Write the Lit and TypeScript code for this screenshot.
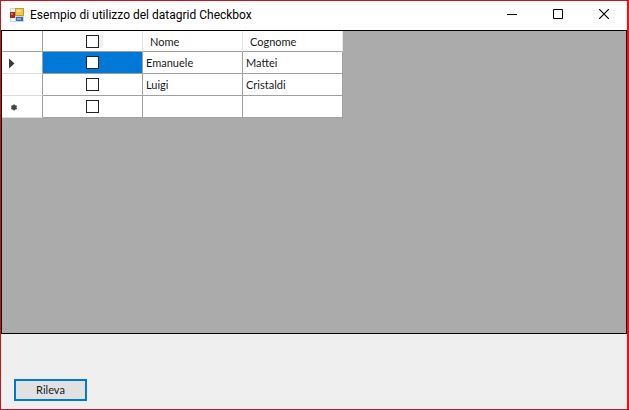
import { LitElement, html, css } from "lit";
import { customElement, state } from "lit/decorators.js";
import { classMap } from "lit/directives/class-map.js";

interface Person {
  nome: string;
  cognome: string;
  checked: boolean;
}

@customElement("app-root")
export class AppRoot extends LitElement {
  static styles = css`
    :host {
      display: flex;
      flex-direction: column;
      box-sizing: border-box;
      min-height: 100vh;
      border: 1px solid #c4161c;
      border-right: 2px solid #ee1111;
      border-bottom-color: #a81c34;
      background: #efefef;
      color: #1a1a22;
      font: 11px/14px Lato, "Liberation Sans", sans-serif;
    }
    .titlebar {
      display: flex;
      align-items: center;
      box-sizing: border-box;
      height: 29px;
      padding: 0 0 2px 9px;
      background: #fff;
      color: #000;
    }
    .logo {
      flex: none;
      width: 14px;
      height: 14px;
      margin-right: 6px;
    }
    .title {
      flex: 1;
      margin: 0;
      font: 12px/16px Roboto, "Liberation Sans", sans-serif;
      white-space: nowrap;
    }
    .caption {
      display: flex;
      align-items: center;
      justify-content: center;
      width: 46px;
      height: 26px;
      padding: 0 0 2px;
      border: 0;
      background: none;
    }
    .grid {
      flex: 1;
      border: 1px solid #000;
      background: #ababab;
    }
    table {
      border-collapse: separate;
      border-spacing: 0;
      table-layout: fixed;
      width: 341px;
      background: #fff;
    }
    .row-head {
      width: 41px;
    }
    th,
    td {
      box-sizing: border-box;
      height: 22px;
      padding: 0 3px;
      border-right: 1px solid #a0a0a0;
      border-bottom: 1px solid #a0a0a0;
      font-weight: 400;
      text-align: left;
      vertical-align: middle;
    }
    thead th {
      height: 21px;
      padding: 2px 7px 0;
      border-right-color: #e4e4e4;
    }
    thead .corner {
      border-right-color: #a0a0a0;
    }
    tbody th {
      padding: 0 7px;
      border-bottom-color: #dcdcdc;
    }
    .check,
    thead .check {
      padding: 0;
    }
    .check.selected {
      background: #0078d7;
    }
    .check input {
      appearance: none;
      display: block;
      box-sizing: border-box;
      width: 13px;
      height: 13px;
      margin: 0 auto;
      border: 1px solid #222;
      background: #fff;
    }
    .check input:checked {
      background: #222;
      box-shadow: inset 0 0 0 2px #fff;
    }
    thead .check input {
      box-shadow: 4px 0 0 #f0f0f0;
    }
    .mark {
      display: block;
    }
    .footer {
      padding: 45px 13px 8px;
    }
    .action {
      display: block;
      width: 73px;
      height: 22px;
      padding: 0;
      border: 2px solid #0078d7;
      background: #e1e1e1;
      color: inherit;
      font: inherit;
    }
  `;

  @state() private people: Person[] = [
    { nome: "Emanuele", cognome: "Mattei", checked: false },
    { nome: "Luigi", cognome: "Cristaldi", checked: false },
    { nome: "", cognome: "", checked: false },
  ];

  private toggle(index: number, e: Event) {
    const checked = (e.target as HTMLInputElement).checked;
    this.people = this.people.map((p, i) => (i === index ? { ...p, checked } : p));
  }

  private toggleAll(e: Event) {
    const checked = (e.target as HTMLInputElement).checked;
    this.people = this.people.map((p) => ({ ...p, checked }));
  }

  private marker(index: number) {
    if (index === 0) {
      return html`<svg class="mark" width="14" height="12" viewBox="0 0 14 12" aria-hidden="true">
        <path d="M0 1.500v10L5.500 6.500z" fill="#3c3840" />
      </svg>`;
    }
    if (index === this.people.length - 1) {
      return html`<svg class="mark" width="14" height="12" viewBox="0 0 14 12" aria-hidden="true">
        <path d="M5 3.500v6M2.300 5l5.400 3M7.700 5l-5.400 3" stroke="#555" stroke-width="1.600" />
        <circle cx="5" cy="6.500" r="2.400" fill="#444" />
      </svg>`;
    }
    return "";
  }

  private renderRow(p: Person, i: number) {
    return html`<tr>
      <th scope="row" class="row-head">${this.marker(i)}</th>
      <td class=${classMap({ check: true, selected: i === 0 })}>
        <input
          type="checkbox"
          aria-label=${p.nome || "Nuova riga"}
          .checked=${p.checked}
          @change=${(e: Event) => this.toggle(i, e)}
        />
      </td>
      <td>${p.nome}</td>
      <td>${p.cognome}</td>
    </tr>`;
  }

  render() {
    return html`
      <header class="titlebar">
        <svg class="logo" viewBox="0 0 14 14" aria-hidden="true">
          <rect width="14" height="14" fill="#cdd5e2" />
          <rect x="1" y="1" width="4" height="3" fill="#eef1f6" />
          <rect x="1" y="10" width="4" height="3" fill="#eef1f6" />
          <rect x="0" y="4" width="5" height="6" fill="#a02a26" />
          <rect x="1" y="5" width="2" height="2" fill="#e0685c" />
          <rect x="5" y="0" width="9" height="8" fill="#c09a34" />
          <rect x="6" y="1" width="7" height="6" fill="#f3c93e" />
          <rect x="7" y="2" width="4" height="2" fill="#fde595" />
          <rect x="6" y="9" width="7" height="4" fill="#3a6bb8" />
          <rect x="7" y="10" width="4" height="2" fill="#7fa9e4" />
        </svg>
        <h1 class="title">Esempio di utilizzo del datagrid Checkbox</h1>
        <button class="caption" aria-label="Riduci a icona">
          <svg width="10" height="10" viewBox="0 0 10 10"><path d="M0 5.500h10" stroke="#000" /></svg>
        </button>
        <button class="caption" aria-label="Ingrandisci">
          <svg width="10" height="10" viewBox="0 0 10 10">
            <path d="M.5.5h9v9h-9z" fill="none" stroke="#000" />
          </svg>
        </button>
        <button class="caption" aria-label="Chiudi">
          <svg width="10" height="10" viewBox="0 0 10 10">
            <path d="M0 0l10 10M10 0L0 10" stroke="#000" stroke-width="1.200" />
          </svg>
        </button>
      </header>
      <main class="grid">
        <table>
          <thead>
            <tr>
              <th class="row-head corner"></th>
              <th class="check" scope="col">
                <input
                  type="checkbox"
                  aria-label="Seleziona tutto"
                  .checked=${this.people.every((p) => p.checked)}
                  @change=${this.toggleAll}
                />
              </th>
              <th scope="col">Nome</th>
              <th scope="col">Cognome</th>
            </tr>
          </thead>
          <tbody>
            ${this.people.map((p, i) => this.renderRow(p, i))}
          </tbody>
        </table>
      </main>
      <footer class="footer">
        <button class="action">Rileva</button>
      </footer>
    `;
  }
}
